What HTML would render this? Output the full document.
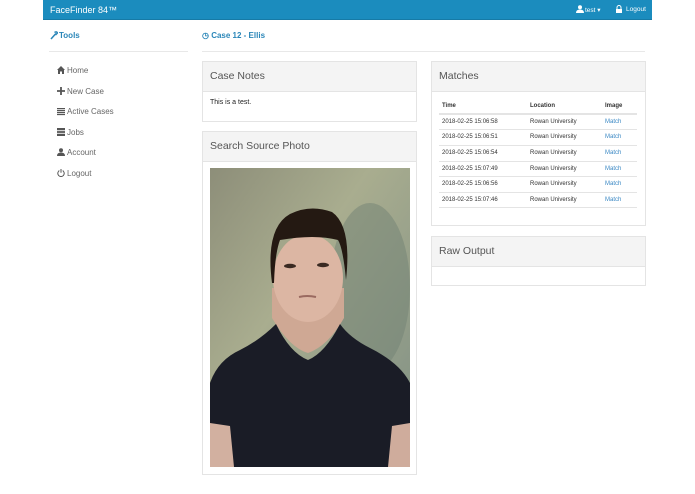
<!DOCTYPE html>
<html><head><meta charset="utf-8"><style>
*{margin:0;padding:0;box-sizing:border-box}
body{width:695px;height:494px;background:#fff;position:relative;overflow:hidden;font-family:"Liberation Sans",sans-serif;color:#333}
.a{position:absolute;white-space:nowrap}
.nav{left:43px;top:0;width:609px;height:20px;background:#1b8cbe;border-bottom:1px solid #167aa6}
.hr{height:1px;background:#e8e8e8}
.panel{position:absolute;border:1px solid #e4e4e4;background:#fff}
.ph{height:30px;background:#f4f4f4;border-bottom:1px solid #e4e4e4;font-size:10.5px;color:#555;padding:8px 7px}
.side{font-size:8px;color:#666}
.t{font-size:6px;color:#333}
.m{font-size:6px;color:#3a88c4}
.row{position:absolute;left:439px;width:198px;height:1px;background:#e4e4e4}
</style></head><body>
<div class="a nav"></div>
<div class="a" style="left:50px;top:5px;font-size:9px;color:#fff">FaceFinder 84™</div>
<svg class="a" style="left:576px;top:5px" width="8" height="8" viewBox="0 0 8 8"><circle cx="4" cy="2.3" r="2" fill="#fff"/><path d="M0 8 Q0 4.5 4 4.5 Q8 4.5 8 8Z" fill="#fff"/></svg>
<div class="a" style="left:585px;top:6px;font-size:6.5px;color:#fff">test ▾</div>
<svg class="a" style="left:615px;top:5px" width="8" height="8" viewBox="0 0 8 8"><path d="M2 4V2.5a2 2 0 0 1 4 0V4" stroke="#fff" fill="none"/><rect x="1" y="4" width="6" height="4" fill="#fff"/></svg>
<div class="a" style="left:626px;top:6px;font-size:6.5px;color:#fff">Logout</div>

<svg class="a" style="left:50px;top:31px" width="8" height="9" viewBox="0 0 8 9"><path d="M1 8 L5 3.5 M4.5 1.5 Q6.5 0 7.5 2 L6 3.5 L5 2.5" stroke="#2a86b8" stroke-width="1.5" fill="none"/></svg>
<div class="a" style="left:59px;top:31px;font-size:8px;font-weight:bold;color:#2a86b8">Tools</div>
<div class="a hr" style="left:49px;top:51px;width:139px"></div>
<div class="a" style="left:202px;top:31px;font-size:8px;font-weight:bold;color:#2a86b8">◷ Case 12 - Ellis</div>
<div class="a hr" style="left:202px;top:51px;width:443px"></div>

<svg class="a" style="left:57px;top:66px" width="8" height="8" viewBox="0 0 8 8"><path d="M0 4 L4 0 L8 4 L7 4 L7 8 L5 8 L5 5.5 L3 5.5 L3 8 L1 8 L1 4Z" fill="#555"/></svg>
<div class="a side" style="left:67px;top:66px">Home</div>
<svg class="a" style="left:57px;top:87px" width="8" height="8" viewBox="0 0 8 8"><path d="M4 0V8M0 4H8" stroke="#555" stroke-width="1.8"/></svg>
<div class="a side" style="left:67px;top:87px">New Case</div>
<svg class="a" style="left:57px;top:108px" width="8" height="8" viewBox="0 0 8 8"><path d="M0 .5H8M0 2.5H8M0 4.5H8M0 6.5H8" stroke="#555" stroke-width="1.2"/></svg>
<div class="a side" style="left:67px;top:107px">Active Cases</div>
<svg class="a" style="left:57px;top:128px" width="8" height="8" viewBox="0 0 8 8"><rect x="0" y="0" width="8" height="8" fill="#555"/><path d="M0 2.7H8M0 5.3H8" stroke="#fff" stroke-width=".8"/></svg>
<div class="a side" style="left:67px;top:128px">Jobs</div>
<svg class="a" style="left:57px;top:148px" width="8" height="8" viewBox="0 0 8 8"><circle cx="4" cy="2.3" r="2" fill="#555"/><path d="M0 8 Q0 4.5 4 4.5 Q8 4.5 8 8Z" fill="#555"/></svg>
<div class="a side" style="left:67px;top:148px">Account</div>
<svg class="a" style="left:57px;top:169px" width="8" height="8" viewBox="0 0 8 8"><path d="M2.3 1.6A3.2 3.2 0 1 0 5.7 1.6" stroke="#555" stroke-width="1" fill="none"/><path d="M4 0V3.8" stroke="#555"/></svg>
<div class="a side" style="left:67px;top:169px">Logout</div>

<div class="panel" style="left:202px;top:61px;width:215px;height:61px"><div class="ph">Case Notes</div><div style="font-size:7px;padding:7px 7px;color:#222">This is a test.</div></div>
<div class="panel" style="left:202px;top:131px;width:215px;height:344px"><div class="ph">Search Source Photo</div></div>
<svg class="a" style="left:210px;top:168px" width="200" height="299" viewBox="0 0 200 299">
<defs><linearGradient id="bg" x1="0" y1="0" x2="1" y2="1"><stop offset="0" stop-color="#8d8e79"/><stop offset=".4" stop-color="#a9ad8f"/><stop offset="1" stop-color="#7f8f84"/></linearGradient></defs>
<rect width="200" height="299" fill="url(#bg)"/>
<ellipse cx="160" cy="120" rx="40" ry="85" fill="#718174" opacity=".5"/>
<path d="M62 120 L62 150 Q80 180 98 185 Q118 178 134 150 L134 120Z" fill="#cfa894"/>
<path d="M0 215 L0 299 L200 299 L200 215 Q190 195 160 180 Q140 170 130 156 Q115 185 98 192 Q80 185 66 156 Q50 172 30 182 Q8 192 0 215Z" fill="#1a1c26"/>
<path d="M0 255 L20 258 L24 299 L0 299Z" fill="#d2b0a0"/>
<path d="M200 255 L182 258 L178 299 L200 299Z" fill="#cfac9c"/>
<ellipse cx="98" cy="110" rx="35" ry="44" fill="#dcb6a3"/>
<path d="M62 115 Q55 60 80 46 Q100 36 122 44 Q142 58 136 112 Q133 80 128 72 Q105 66 70 72 Q65 85 64 115Z" fill="#241912"/>
<ellipse cx="80" cy="98" rx="6" ry="2.2" fill="#3a2a22"/><ellipse cx="113" cy="97" rx="6" ry="2.2" fill="#3a2a22"/>
<path d="M89 129 Q97 127 106 129" stroke="#9a6a60" stroke-width="2" fill="none"/>
</svg>

<div class="panel" style="left:431px;top:61px;width:215px;height:165px"><div class="ph">Matches</div></div>
<div class="a t" style="left:442px;top:103px;font-weight:bold">Time</div>
<div class="a t" style="left:530px;top:103px;font-weight:bold">Location</div>
<div class="a t" style="left:605px;top:103px;font-weight:bold">Image</div>
<div class="row" style="top:113px;height:2px"></div>
<div class="a t" style="left:442px;top:119px">2018-02-25 15:06:58</div><div class="a t" style="left:530px;top:119px">Rowan University</div><div class="a m" style="left:605px;top:119px">Match</div>
<div class="row" style="top:129px"></div>
<div class="a t" style="left:442px;top:134px">2018-02-25 15:06:51</div><div class="a t" style="left:530px;top:134px">Rowan University</div><div class="a m" style="left:605px;top:134px">Match</div>
<div class="row" style="top:145px"></div>
<div class="a t" style="left:442px;top:150px">2018-02-25 15:06:54</div><div class="a t" style="left:530px;top:150px">Rowan University</div><div class="a m" style="left:605px;top:150px">Match</div>
<div class="row" style="top:161px"></div>
<div class="a t" style="left:442px;top:166px">2018-02-25 15:07:49</div><div class="a t" style="left:530px;top:166px">Rowan University</div><div class="a m" style="left:605px;top:166px">Match</div>
<div class="row" style="top:176px"></div>
<div class="a t" style="left:442px;top:181px">2018-02-25 15:06:56</div><div class="a t" style="left:530px;top:181px">Rowan University</div><div class="a m" style="left:605px;top:181px">Match</div>
<div class="row" style="top:192px"></div>
<div class="a t" style="left:442px;top:197px">2018-02-25 15:07:46</div><div class="a t" style="left:530px;top:197px">Rowan University</div><div class="a m" style="left:605px;top:197px">Match</div>
<div class="row" style="top:207px"></div>

<div class="panel" style="left:431px;top:236px;width:215px;height:50px"><div class="ph">Raw Output</div></div>
</body></html>
